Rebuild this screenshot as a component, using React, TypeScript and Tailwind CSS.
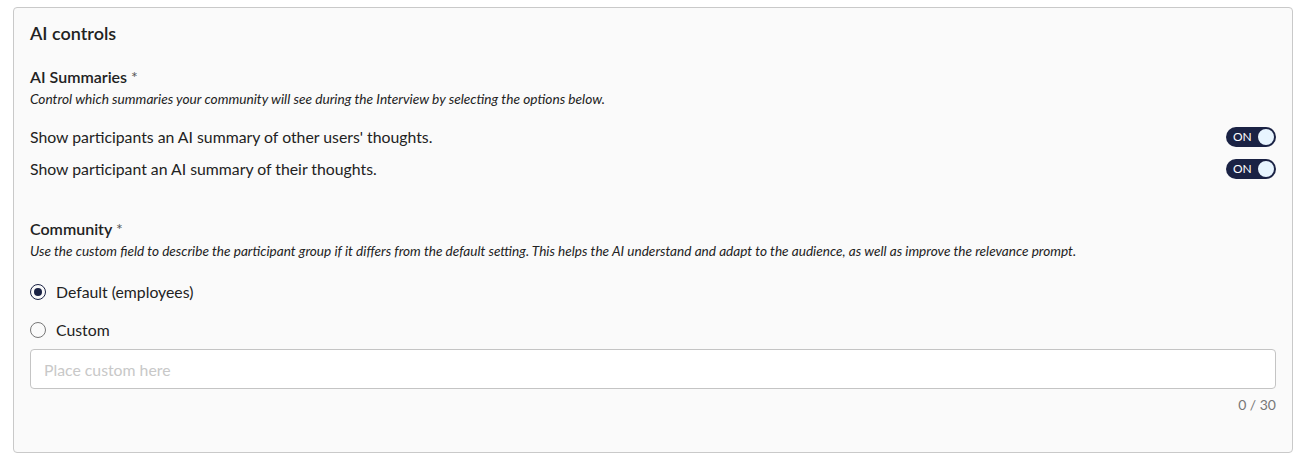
import React, { useState } from 'react';

function Toggle({ on }: { on: boolean }) {
  return (
    <button className="flex h-[20px] w-[50px] shrink-0 items-center justify-between rounded-full bg-[#1a2244] pl-[7px] pr-[2px]">
      <span className="text-[12px] leading-none text-white">{on ? 'ON' : 'OFF'}</span>
      <span className="h-[16px] w-[16px] rounded-full bg-[#e8f5ff]" />
    </button>
  );
}

function Radio({ checked, label }: { checked: boolean; label: string }) {
  return (
    <label className="flex h-[20px] items-center gap-[10px] text-[15.8px] text-[#222]">
      <span
        className={`flex h-[16px] w-[16px] items-center justify-center rounded-full border-[1.5px] ${
          checked ? 'border-[#1a2244]' : 'border-[#777]'
        }`}
      >
        {checked && <span className="h-[8px] w-[8px] rounded-full bg-[#1a2244]" />}
      </span>
      {label}
    </label>
  );
}

export default function App() {
  const [custom, setCustom] = useState('');

  return (
    <div className="min-h-screen bg-white pl-[13px] pr-[14px] pt-[7px] font-['Lato','Liberation_Sans',sans-serif] text-[#222]">
      <div className="h-[446px] rounded-[4px] border border-[#c9c9c9] bg-[#fafafa] px-[16px] pt-[13px]">
        <h2 className="text-[18px] font-semibold leading-[24px]">AI controls</h2>

        {/* AI Summaries */}
        <div className="mt-[22px]">
          <div className="text-[16px] font-semibold leading-[20px]">
            AI Summaries <span className="font-normal text-[#555]">*</span>
          </div>
          <p className="mt-[3px] text-[13.7px] italic leading-[18px]">
            Control which summaries your community will see during the Interview by selecting the options below.
          </p>
        </div>

        <div className="mt-[19px] flex flex-col gap-[12px]">
          <div className="flex h-[20px] items-center justify-between text-[15.8px]">
            <span>Show participants an AI summary of other users' thoughts.</span>
            <Toggle on />
          </div>
          <div className="flex h-[20px] items-center justify-between text-[15.8px]">
            <span>Show participant an AI summary of their thoughts.</span>
            <Toggle on />
          </div>
        </div>

        {/* Community */}
        <div className="mt-[40px]">
          <div className="text-[16px] font-semibold leading-[20px]">
            Community <span className="font-normal text-[#555]">*</span>
          </div>
          <p className="mt-[3px] text-[13.6px] italic leading-[18px]">
            Use the custom field to describe the participant group if it differs from the default setting. This helps the AI understand and adapt to the audience, as well as improve the relevance prompt.
          </p>
        </div>

        <div className="mt-[22px] flex flex-col gap-[18px]">
          <Radio checked label="Default (employees)" />
          <Radio checked={false} label="Custom" />
        </div>

        <input
          value={custom}
          onChange={(e) => setCustom(e.target.value)}
          placeholder="Place custom here"
          className="mt-[9px] h-[40px] w-full rounded-[4px] border border-[#c4c4c4] bg-white px-[13px] text-[15.8px] outline-none placeholder:text-[#c8c8c8]"
        />
        <div className="mt-[7px] text-right text-[14px] leading-[18px] text-[#777]">{custom.length} / 30</div>
      </div>
    </div>
  );
}
